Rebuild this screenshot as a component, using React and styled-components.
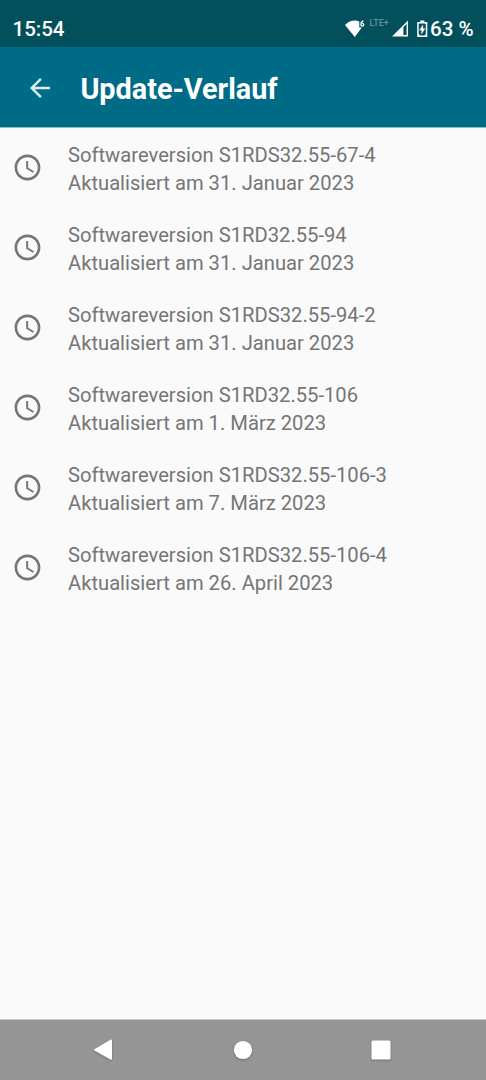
import React from 'react';
import styled, { createGlobalStyle } from 'styled-components';

const GlobalStyle = createGlobalStyle`
body {
    margin: 0;
    background: #fafafa;
    font-family: Roboto, sans-serif;
}
`

const Screen = styled.div`
display: flex;
flex-direction: column;
height: 1080px;
width: 486px;
overflow: hidden;
background: #fafafa;
`

const StatusBar = styled.div`
display: flex;
flex: none;
align-items: center;
box-sizing: border-box;
height: 47px;
padding: 11px 13px 0 12.5px;
background: #03505d;
color: #fff;
`

const Time = styled.span`
flex: 1;
font-size: 20.5px;
font-weight: 500;
line-height: 24px;
`

const Network = styled.span`
align-self: flex-start;
width: 22px;
margin-top: 7px;
color: #5f939c;
font-size: 9px;
font-weight: 500;
line-height: 11px;
white-space: nowrap;
`

const Percent = styled.span`
width: 43px;
font-size: 20.5px;
font-weight: 500;
line-height: 24px;
white-space: nowrap;
`

const StatusIcon = styled.svg`
display: block;
flex: none;
width: ${props => props.$width}px;
height: 18px;
margin-right: ${props => props.$gap}px;
`

const Header = styled.header`
display: flex;
flex: none;
align-items: center;
box-sizing: border-box;
height: 80px;
padding: 2px 0 0 25px;
background: #006b87;
color: #fff;
`

const BackIcon = styled.svg`
width: 30px;
height: 30px;
margin-right: 25.4px;
fill: #dcecf0;
`

const Title = styled.h1`
margin: 0;
padding-top: 1px;
font-size: 28.8px;
font-weight: 700;
line-height: 34px;
`

const List = styled.ul`
flex: 1;
margin: 0;
padding: 0;
border-top: 1px solid #8abac6;
list-style: none;
`

const Row = styled.li`
display: flex;
align-items: center;
height: 80px;
padding-left: 12px;
color: #757575;
`

const ClockIcon = styled.svg`
width: 31px;
height: 31px;
margin: 0 25px 2px 0;
fill: #757575;
`

const RowText = styled.div`
padding-top: 3px;
font-size: 20.2px;
line-height: 27.4px;
white-space: nowrap;
`

const NavBar = styled.nav`
display: flex;
flex: none;
align-items: center;
justify-content: space-between;
box-sizing: border-box;
height: 61px;
padding: 0 93px 0 91px;
border-top: 1px solid #c8c8c8;
background: #959595;
`

const NavIcon = styled.svg`
width: 24px;
height: 24px;
fill: #fff;
filter: drop-shadow(0 1px 1px rgba(0, 0, 0, 0.25));
`

const updates = [
    { version: 'S1RDS32.55-67-4', date: '31. Januar 2023' },
    { version: 'S1RD32.55-94', date: '31. Januar 2023' },
    { version: 'S1RDS32.55-94-2', date: '31. Januar 2023' },
    { version: 'S1RD32.55-106', date: '1. März 2023' },
    { version: 'S1RDS32.55-106-3', date: '7. März 2023' },
    { version: 'S1RDS32.55-106-4', date: '26. April 2023' },
]

function Status() {
    return (
        <StatusBar>
            <Time>15:54</Time>
            <StatusIcon $width={20} $gap={5} viewBox="0 0 20 18">
                <path d="M0 5Q4.5 0.6 10 0.6Q12.5 0.6 14.3 1.4V7.4H16.8L9.8 17Z" fill="#fff" />
                <path d="M18.3 1Q15.9 1.5 15.9 4.8A1.4 1.4 0 1 0 17.3 3.4" fill="none" stroke="#fff" strokeWidth="1.3" />
            </StatusIcon>
            <Network>LTE+</Network>
            <StatusIcon $width={16} $gap={9.5} viewBox="0 0 16 18">
                <path d="M0 16.5L16 0.5V16.5ZM11.4 7.1V15.1H14.6V3.9Z" fill="#fff" fillRule="evenodd" />
            </StatusIcon>
            <StatusIcon $width={10.5} $gap={2.5} viewBox="0 0 10.5 18">
                <path d="M3.2 0.4H7.3V2H10.3V17H0.2V2H3.2ZM1.7 4V14L3 15.5H7.5L8.8 14V4L7.8 3.4H2.7Z" fill="#fff" fillRule="evenodd" />
                <path d="M6.1 4.6L2.2 10.2H4.4V14.4L8.3 8.5H6.1Z" fill="#fff" />
            </StatusIcon>
            <Percent>63 %</Percent>
        </StatusBar>
    )
}

function App() {
    return (
        <Screen>
            <GlobalStyle />
            <Status />
            <Header>
                <BackIcon viewBox="0 0 24 24">
                    <path d="M20 11H7.83l5.59-5.59L12 4l-8 8 8 8 1.41-1.41L7.83 13H20v-2z" />
                </BackIcon>
                <Title>Update-Verlauf</Title>
            </Header>
            <List>
                {updates.map(update => (
                    <Row key={update.version}>
                        <ClockIcon viewBox="0 0 24 24">
                            <path d="M11.99 2C6.47 2 2 6.48 2 12s4.47 10 9.99 10C17.52 22 22 17.52 22 12S17.52 2 11.99 2zM12 20c-4.42 0-8-3.58-8-8s3.58-8 8-8 8 3.58 8 8-3.58 8-8 8zm.5-13H11v6l5.25 3.15.75-1.23-4.5-2.67z" />
                        </ClockIcon>
                        <RowText>
                            Softwareversion {update.version}<br />
                            Aktualisiert am {update.date}
                        </RowText>
                    </Row>
                ))}
            </List>
            <NavBar>
                <NavIcon viewBox="0 0 24 24">
                    <path d="M3.8 11L19.4 1.8Q21 1 21 2.6V20.6Q21 22.4 19.4 21.4L3.8 12.8Q2.4 11.9 3.8 11Z" />
                </NavIcon>
                <NavIcon viewBox="0 0 24 24">
                    <circle cx="13" cy="12" r="9.1" />
                </NavIcon>
                <NavIcon viewBox="0 0 24 24">
                    <rect x="2.5" y="2.5" width="19" height="19" rx="1.5" />
                </NavIcon>
            </NavBar>
        </Screen>
    )
}

export default App
